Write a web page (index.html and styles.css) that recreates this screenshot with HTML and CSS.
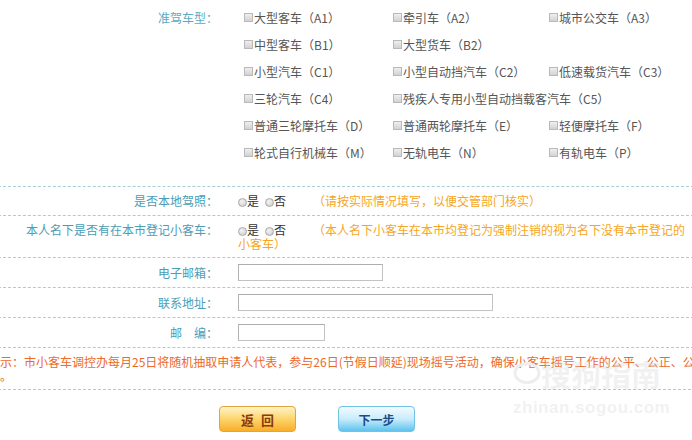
FILE: index.html
```html
<!DOCTYPE HTML>
<html>
<head>
<meta charset="UTF-8">
<title>小客车指标申请</title>
<link rel="stylesheet" href="styles.css">
</head>

<body>
<div class="page">
	<div class="row row-types">
		<div class="label">准驾车型：</div>
		<div class="field types">
			<label class="item"><input type="checkbox" class="chk">大型客车（A1）</label>
			<label class="item"><input type="checkbox" class="chk">牵引车（A2）</label>
			<label class="item"><input type="checkbox" class="chk">城市公交车（A3）</label>
			<label class="item"><input type="checkbox" class="chk">中型客车（B1）</label>
			<label class="item"><input type="checkbox" class="chk">大型货车（B2）</label>
			<span></span>
			<label class="item"><input type="checkbox" class="chk">小型汽车（C1）</label>
			<label class="item"><input type="checkbox" class="chk">小型自动挡汽车（C2）</label>
			<label class="item"><input type="checkbox" class="chk">低速载货汽车（C3）</label>
			<label class="item"><input type="checkbox" class="chk">三轮汽车（C4）</label>
			<label class="item wide"><input type="checkbox" class="chk">残疾人专用小型自动挡载客汽车（C5）</label>
			<label class="item"><input type="checkbox" class="chk">普通三轮摩托车（D）</label>
			<label class="item"><input type="checkbox" class="chk">普通两轮摩托车（E）</label>
			<label class="item"><input type="checkbox" class="chk">轻便摩托车（F）</label>
			<label class="item"><input type="checkbox" class="chk">轮式自行机械车（M）</label>
			<label class="item"><input type="checkbox" class="chk">无轨电车（N）</label>
			<label class="item"><input type="checkbox" class="chk">有轨电车（P）</label>
		</div>
	</div>

	<div class="row row-text row-local">
		<div class="label">是否本地驾照：</div>
		<div class="field"><input type="radio" name="local" class="rad">是<input type="radio" name="local" class="rad second">否<span class="note">（请按实际情况填写，以便交管部门核实）</span></div>
	</div>

	<div class="row row-text row-owned">
		<div class="label">本人名下是否有在本市登记小客车：</div>
		<div class="field"><input type="radio" name="owned" class="rad">是<input type="radio" name="owned" class="rad second">否<span class="note">（本人名下小客车在本市均登记为强制注销的视为名下没有本市登记的小客车）</span></div>
	</div>

	<div class="row row-input">
		<div class="label">电子邮箱：</div>
		<div class="field"><input type="text" class="txt txt-email"></div>
	</div>

	<div class="row row-input">
		<div class="label">联系地址：</div>
		<div class="field"><input type="text" class="txt txt-addr"></div>
	</div>

	<div class="row row-input">
		<div class="label">邮　编：</div>
		<div class="field"><input type="text" class="txt txt-zip"></div>
	</div>

	<div class="notice">提示：市小客车调控办每月25日将随机抽取申请人代表，参与26日(节假日顺延)现场摇号活动，确保小客车摇号工作的公平、公正、公开。</div>

	<div class="actions">
		<button class="btn btn-back">返&nbsp;回</button>
		<button class="btn btn-next">下一步</button>
	</div>
</div>

<div class="watermark">
	<div class="wm-top">
		<svg width="28" height="22" viewBox="0 0 28 22"><ellipse cx="14" cy="11" rx="12" ry="9.5" fill="none" stroke="#eeeeee" stroke-width="3"/></svg>
		<span class="wm-name">搜狗指南</span>
	</div>
	<div class="wm-url">zhinan.sogou.com</div>
</div>
</body>
</html>
```

FILE: styles.css
```css
html, body {margin:0; padding:0; background:#fff;}
body {font:12px "Noto Sans CJK SC", "Liberation Sans", sans-serif; color:#333; overflow:hidden; height:440px; position:relative;}

.page {width:706px; margin-left:-12px;}
.row {display:flex; border-bottom:1px dashed #a9ccd5;}
.label {width:230px; flex:none; text-align:right; color:#4a9db5; white-space:nowrap;}
.field {margin-left:20px; flex:1; min-width:0;}

/* 准驾车型 */
.row-types {padding:4px 0 20px;}
.row-types .label {line-height:27px; color:#5aaac2;}
.types {display:grid; grid-template-columns:149px 156px auto; padding-left:6px; line-height:27px; color:#555;}
.item {display:flex; align-items:center; white-space:nowrap;}
.wide {grid-column:span 2;}
.chk {appearance:none; -webkit-appearance:none; width:9px; height:9px; margin:0 1px 0 0; box-sizing:border-box; border:1px solid #b9b9b9; background:linear-gradient(#efefef, #d2d2d2);}

/* radios + notes */
.row-text {line-height:14px;}
.row-local {padding:7px 0 7px;}
.row-owned {padding:7px 0 6px;}
.row-owned .field {padding-right:4px;}
.rad {appearance:none; -webkit-appearance:none; width:9px; height:9px; margin:0; border-radius:50%; box-sizing:border-box; border:1px solid #a8a8a8; background:radial-gradient(circle at 40% 35%, #f2f2f2, #cdcdcd); vertical-align:-1px;}
.rad.second {margin-left:6px;}
.note {margin-left:27px; color:#f5a623;}

/* text inputs */
.row-input {padding:6px 0; align-items:center;}
.txt {display:block; height:17px; margin:0; padding:0 2px; box-sizing:border-box; border:1px solid #c3c3c3; border-top-color:#adadad; border-left-color:#b3b3b3; background:#fff;}
.txt-email {width:145px;}
.txt-addr {width:255px;}
.txt-zip {width:87px;}

.notice {margin-right:-2px; padding:7px 0 6px; line-height:14px; color:#ec6a2c; border-bottom:1px dashed #a9ccd5;}

.actions {display:flex; gap:42px; padding:16px 0 0 231px;}
.btn {width:77px; height:26px; padding:0; border-radius:4px; box-sizing:border-box; font:bold 13px "Noto Sans CJK SC", sans-serif; cursor:pointer;}
.btn-back {border:1px solid #e3a43c; background:linear-gradient(#fff4c8, #fdd46a 50%, #f8ae2a); color:#8a3a0c; word-spacing:4px;}
.btn-next {border:1px solid #74c3e4; background:linear-gradient(#f3fbff, #c9ecfb 50%, #5ec3ee); color:#1d4a88; font-size:12px;}

.watermark {position:absolute; left:513px; top:356px; color:rgba(215,215,215,0.35); pointer-events:none;}
.wm-top {display:flex; align-items:center;}
.wm-name {font-size:30px; font-weight:bold; line-height:34px;}
.wm-url {font:bold 17px "Liberation Sans", sans-serif; margin-top:8px; letter-spacing:0.5px;}
```
